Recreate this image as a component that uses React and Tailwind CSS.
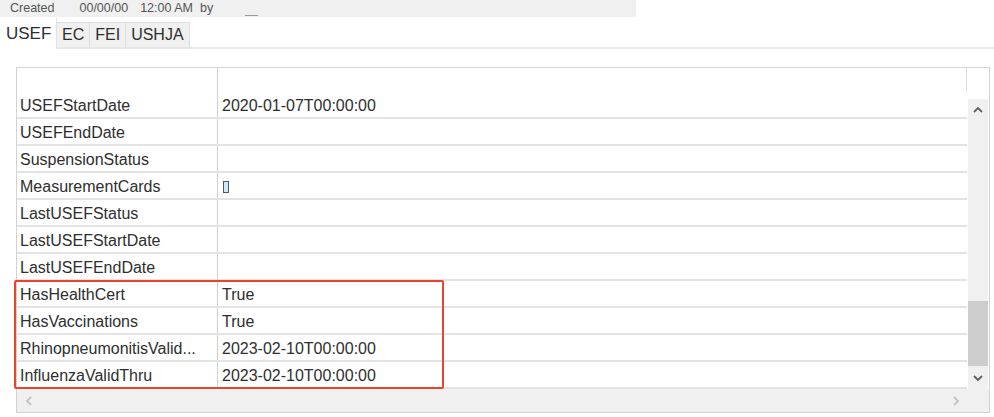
import React from 'react';

const rows = [
  ['USEFStartDate', '2020-01-07T00:00:00'],
  ['USEFEndDate', ''],
  ['SuspensionStatus', ''],
  ['MeasurementCards', '[]'],
  ['LastUSEFStatus', ''],
  ['LastUSEFStartDate', ''],
  ['LastUSEFEndDate', ''],
  ['HasHealthCert', 'True'],
  ['HasVaccinations', 'True'],
  ['RhinopneumonitisValid...', '2023-02-10T00:00:00'],
  ['InfluenzaValidThru', '2023-02-10T00:00:00'],
];

const tabs = ['EC', 'FEI', 'USHJA'];

function Chevron({ dir, className }) {
  const d = {
    up: 'M1 6 L5 2 L9 6',
    down: 'M1 2 L5 6 L9 2',
    left: 'M6 1 L2 5 L6 9',
    right: 'M2 1 L6 5 L2 9',
  }[dir];
  const vertical = dir === 'up' || dir === 'down';
  return (
    <svg
      width={vertical ? 10 : 8}
      height={vertical ? 8 : 10}
      viewBox={vertical ? '0 0 10 8' : '0 0 8 10'}
      className={className}
    >
      <path d={d} fill="none" stroke="currentColor" strokeWidth="1.8" />
    </svg>
  );
}

function Row({ name, value }) {
  return (
    <div className="flex h-[27px] border-b-2 border-[#e3e3e3]">
      <div className="w-[201px] shrink-0 border-r border-[#cfcfcf] pl-[3px] pt-[3px] flex items-center whitespace-nowrap overflow-hidden">
        {name}
      </div>
      <div className="flex-1 pl-[4px] pt-[3px] flex items-center whitespace-nowrap">
        {value === '[]' ? (
          <span className="inline-block w-[6px] h-[12px] border border-[#555] bg-[#cfe8f7] ml-[1px]" />
        ) : (
          value
        )}
      </div>
    </div>
  );
}

export default function App() {
  return (
    <div className="w-[994px] h-[417px] bg-white overflow-hidden font-['Liberation_Sans',Arial,sans-serif] text-[#2e2e2e]">
      {/* record info bar */}
      <div className="w-[636px] h-[17px] bg-[#f0f0f0] flex items-center text-[12.5px] text-[#555] relative">
        <span className="ml-[10px]">Created</span>
        <span className="ml-[25px]">00/00/00</span>
        <span className="ml-[12px]">12:00 AM</span>
        <span className="ml-[7px]">by</span>
        <span className="absolute left-[245px] top-[15px] w-[13px] h-[1px] bg-[#9a9a9a]" />
      </div>

      {/* tabs */}
      <div className="flex items-end h-[32px]">
        <div className="w-[57px] h-[31px] bg-white border-r border-[#e2e2e2] flex items-center pl-[6px] text-[17px]">
          USEF
        </div>
        {tabs.map((t) => (
          <div
            key={t}
            className="h-[27px] bg-[#f0f0f0] border-t border-r border-[#dedede] border-b-2 border-b-[#e6e6e6] px-[5px] flex items-center text-[16px]"
          >
            {t}
          </div>
        ))}
        <div className="flex-1 border-b-2 border-[#e9e9e9]" />
      </div>

      {/* property grid */}
      <div className="relative ml-[16px] mt-[18px] w-[974px] h-[346px] border border-[#d2d2d2] flex flex-col text-[16px]">
        <div className="flex h-[321px]">
          <div className="w-[950px] shrink-0 flex flex-col">
            <div className="flex h-[24px]">
              <div className="w-[201px] border-r border-[#cfcfcf]" />
              <div className="flex-1 border-r border-[#dcdcdc]" />
            </div>
            {rows.map(([n, v]) => (
              <Row key={n} name={n} value={v} />
            ))}
          </div>
          <div className="flex-1 flex flex-col pl-[1px] pr-[1px]">
            <div className="h-[31px]" />
            <div className="flex-1 bg-[#f0f0f0] flex flex-col items-center">
              <div className="h-[22px] flex items-center justify-center text-[#606060]">
                <Chevron dir="up" />
              </div>
              <div className="flex-1 w-full flex flex-col">
                <div className="h-[180px]" />
                <div className="h-[65px] bg-[#cdcdcd]" />
              </div>
              <div className="h-[22px] flex items-center justify-center text-[#606060]">
                <Chevron dir="down" />
              </div>
            </div>
          </div>
        </div>
        <div className="h-[23px] bg-[#f0f0f0] flex items-center justify-between px-[8px] text-[#c2c2c2]">
          <Chevron dir="left" />
          <Chevron dir="right" className="mr-[21px]" />
        </div>

        {/* highlight box */}
        <div className="absolute left-[-3px] top-[212px] w-[430px] h-[109px] border-2 border-[#e8442e] rounded-[2px] pointer-events-none" />
      </div>
    </div>
  );
}
